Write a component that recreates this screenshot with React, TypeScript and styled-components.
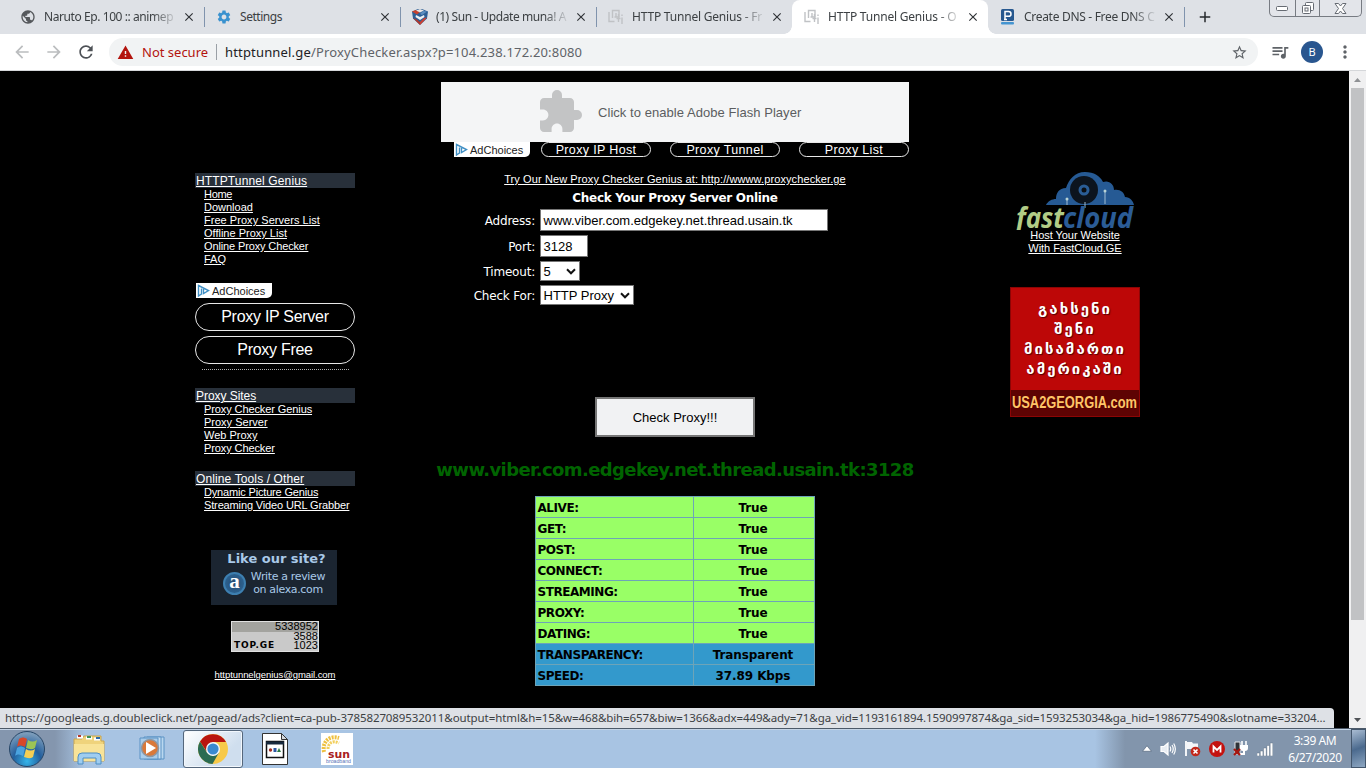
import React from "react";
import styled, { createGlobalStyle, css } from "styled-components";
import {
    MdAdd,
    MdArrowBack,
    MdArrowForward,
    MdClose,
    MdExtension,
    MdMoreVert,
    MdPublic,
    MdQueueMusic,
    MdRefresh,
    MdSettings,
    MdStarBorder,
    MdWarning,
} from "react-icons/md";

const GlobalStyle = createGlobalStyle`
    * {
        box-sizing: border-box;
    }
    body {
        margin: 0;
        background: #000;
        overflow: hidden;
    }
`;

const uiFont = `"Noto Sans", "Open Sans", sans-serif`;
const arial = `"Liberation Sans", Arial, sans-serif`;
const verdana = `"DejaVu Sans", Verdana, sans-serif`;

const Screen = styled.div`
    width: 1366px;
    height: 768px;
    display: flex;
    flex-direction: column;
    overflow: hidden;
    font-family: ${arial};
`;

/* tab strip */

const TabStrip = styled.div`
    height: 34px;
    flex: none;
    display: flex;
    align-items: flex-start;
    padding-left: 8px;
    background: #dee1e6;
`;

const TabBox = styled.div<{ $active?: boolean; $line?: boolean }>`
    position: relative;
    width: 196px;
    height: 34px;
    flex: none;
    display: flex;
    align-items: center;
    padding: 0 7px 0 12px;
    color: #3c4043;
    ${(p) => p.$active && css`
        background: #fff;
        border-radius: 8px 8px 0 0;
        &::before,
        &::after {
            content: "";
            position: absolute;
            bottom: 0;
            width: 8px;
            height: 8px;
        }
        &::before {
            left: -8px;
            background: radial-gradient(circle at 0 0, #dee1e6 7.5px, #fff 8px);
        }
        &::after {
            right: -8px;
            background: radial-gradient(circle at 100% 0, #dee1e6 7.5px, #fff 8px);
        }
    `}
    ${(p) => p.$line && css`
        &::after {
            content: "";
            position: absolute;
            right: -1px;
            top: 7px;
            width: 1px;
            height: 20px;
            background: #8093ad;
        }
    `}
    > svg {
        flex: none;
    }
`;

const TabTitle = styled.span<{ $fade?: boolean; $ls: number }>`
    width: 132px;
    margin-left: 8px;
    margin-right: 6px;
    overflow: hidden;
    white-space: nowrap;
    font: 12px/16px ${uiFont};
    letter-spacing: ${(p) => p.$ls}px;
    ${(p) => p.$fade && css`
        mask-image: linear-gradient(90deg, #000 108px, transparent 134px);
    `}
`;

const NewTab = styled.div`
    width: 43px;
    height: 34px;
    padding-left: 12px;
    display: flex;
    align-items: center;
    color: #26292c;
`;

const WindowButtons = styled.div`
    margin-left: 42px;
    width: 93px;
    height: 17px;
    display: flex;
    border: 1px solid #777b82;
    border-top: none;
    border-radius: 0 0 5px 5px;
    background: #e3e5ea;
`;

const WindowButton = styled.div<{ $w: number }>`
    width: ${(p) => p.$w}px;
    display: flex;
    align-items: center;
    justify-content: center;
    & + & {
        border-left: 1px solid #777b82;
    }
`;

/* toolbar */

const Toolbar = styled.div`
    height: 37px;
    flex: none;
    display: flex;
    align-items: center;
    padding: 0 0 0 12px;
    background: #fff;
    border-bottom: 1px solid #d5d7da;
    > svg {
        flex: none;
        color: #5f6368;
    }
`;

const NavButton = styled.div<{ $off?: boolean }>`
    width: 32px;
    height: 20px;
    color: ${(p) => (p.$off ? "#bbbdbf" : "#4d5156")};
`;

const Omnibox = styled.div`
    width: 1149px;
    height: 28px;
    margin: 0 12px 0 1px;
    padding: 0 10px 0 8px;
    display: flex;
    align-items: center;
    border-radius: 14px;
    background: #f1f3f4;
    font: 13px/20px ${uiFont};
    color: #5f6368;
    white-space: nowrap;
`;

const NotSecure = styled.span`
    margin-left: 8px;
    width: 74px;
    color: #b3140e;
`;

const Url = styled.span`
    flex: 1;
    padding-left: 9px;
    letter-spacing: 0.17px;
    background: linear-gradient(#9aa0a6, #9aa0a6) 0 2px / 1px 16px no-repeat;
    b {
        font-weight: normal;
        color: #202124;
    }
`;

const Avatar = styled.div`
    width: 22px;
    height: 22px;
    margin: 0 12px 0 11px;
    border-radius: 50%;
    background: #29568f;
    color: #fff;
    font: 11px/22px ${uiFont};
    text-align: center;
`;

/* page */

const Viewport = styled.div`
    position: relative;
    height: 657px;
    flex: none;
    display: flex;
`;

const Page = styled.div`
    width: 1349px;
    padding-left: 195px;
    display: grid;
    grid-template-columns: 160px 640px 160px;
    background: #000;
    color: #fff;
`;

const Scrollbar = styled.div`
    width: 17px;
    display: flex;
    flex-direction: column;
    align-items: center;
    background: #f0f0f1;
`;

const ScrollArrow = styled.div`
    height: 17px;
    display: flex;
    align-items: center;
`;

const Thumb = styled.div`
    width: 13px;
    height: 532px;
    margin-bottom: auto;
    background: #c1c2c4;
`;

const Side = styled.div`
    padding-top: 102px;
    display: flex;
    flex-direction: column;
`;

const MenuHead = styled.div<{ $gap?: number; $ls?: number }>`
    height: 15px;
    margin-top: ${(p) => p.$gap || 0}px;
    padding-left: 1px;
    background: #28303a;
    font: 12px/16px ${arial};
    letter-spacing: ${(p) => p.$ls || 0}px;
    text-decoration: underline;
    white-space: nowrap;
`;

const MenuLink = styled.a<{ $ls: number }>`
    display: block;
    height: 13px;
    padding-left: 9px;
    font: 11px/13px ${arial};
    letter-spacing: ${(p) => p.$ls}px;
    text-decoration: underline;
    white-space: nowrap;
`;

const AdTag = styled.div`
    width: 76px;
    height: 15px;
    display: flex;
    align-items: center;
    padding-left: 1px;
    gap: 2px;
    border-radius: 0 0 5px 0;
    background: #fff;
    color: #222;
    font: 11px/13px ${arial};
    white-space: nowrap;
    span {
        padding-top: 2px;
    }
`;

const Pill = styled.div<{ $small?: boolean }>`
    display: flex;
    align-items: center;
    justify-content: center;
    width: ${(p) => (p.$small ? 110 : 160)}px;
    height: ${(p) => (p.$small ? 15 : 28)}px;
    border: 1px solid #e8e8e8;
    border-radius: 14px;
    font-size: ${(p) => (p.$small ? 12.5 : 16)}px;
    letter-spacing: ${(p) => (p.$small ? 0.35 : -0.28)}px;
    white-space: nowrap;
`;

const SidePills = styled.div`
    display: flex;
    flex-direction: column;
    gap: 5px;
    margin-top: 17px;
    ${AdTag} {
        margin-left: 1px;
    }
`;

const Dotted = styled.div`
    margin: 5px 6px 0 7px;
    border-top: 1px dotted #b0b0b0;
`;

const AlexaBadge = styled.div`
    width: 126px;
    height: 55px;
    margin: 38px 0 0 16px;
    display: grid;
    grid-template-columns: 36px 90px;
    grid-template-rows: 17px 38px;
    background: #1b2531;
    color: #a9c9e8;
    font: 11px/13px ${verdana};
`;

const AlexaTitle = styled.div`
    grid-column: 1 / 3;
    padding-left: 5px;
    text-align: center;
    font: bold 13px/17px ${verdana};
    white-space: nowrap;
`;

const AlexaLogo = styled.div`
    width: 23px;
    height: 23px;
    margin: 5px 0 0 12px;
    border: 2px solid #3d7fb0;
    border-radius: 50%;
    background: radial-gradient(#274b70, #2e6a9c);
    color: #fff;
    font: bold 21px/14px "Liberation Serif", serif;
    text-align: center;
`;

const AlexaText = styled.div`
    margin-top: 3px;
    padding-right: 8px;
    text-align: center;
    white-space: nowrap;
    letter-spacing: -0.35px;
`;

const TopGe = styled.div`
    width: 88px;
    height: 31px;
    margin: 16px 0 0 36px;
    padding: 0 1px 0 2px;
    display: flex;
    justify-content: space-between;
    align-items: flex-end;
    border: 1px solid #e0e0e0;
    background: linear-gradient(#a3a39f 10px, #c9c9c9 10px);
    color: #000;
    font: bold 9px/12px ${verdana};
    letter-spacing: 0.9px;
`;

const Counts = styled.div`
    font: 11px/9.7px ${arial};
    text-align: right;
    letter-spacing: 0;
`;

const Mail = styled.a`
    margin-top: 16px;
    text-align: center;
    font: 9.5px/13px ${arial};
    letter-spacing: -0.07px;
    text-decoration: underline;
`;

/* centre column */

const Center = styled.div`
    padding-top: 11px;
    display: flex;
    flex-direction: column;
    align-items: center;
`;

const FlashBanner = styled.div`
    width: 468px;
    height: 60px;
    display: flex;
    align-items: center;
    padding-left: 95px;
    background: #f4f5f6;
    color: #5b5d60;
    font-size: 13px;
    letter-spacing: 0.05px;
    white-space: nowrap;
    svg {
        flex: none;
        margin-right: 14px;
    }
`;

const AdRow = styled.div`
    width: 468px;
    padding-left: 13px;
    display: flex;
    align-items: center;
    ${Pill} {
        margin-left: 19px;
    }
    ${AdTag} + ${Pill} {
        margin-left: 11px;
    }
`;

const TryLink = styled.a`
    margin-top: 16px;
    font: 11px/13px ${arial};
    letter-spacing: 0.1px;
    text-decoration: underline;
    white-space: nowrap;
`;

const Heading = styled.div`
    height: 15px;
    margin-top: 5px;
    font: bold 12px/15px ${verdana};
    letter-spacing: -0.3px;
    white-space: nowrap;
`;

const Form = styled.div`
    width: 640px;
    margin-top: 3px;
    display: grid;
    grid-template-columns: 180px 1fr;
    column-gap: 5px;
    row-gap: 4px;
`;

const Label = styled.div`
    align-self: center;
    padding-top: 2px;
    text-align: right;
    font: 12px/16px ${verdana};
    letter-spacing: -0.2px;
`;

const Field = styled.div<{ $w: number; $h: number }>`
    width: ${(p) => p.$w}px;
    height: ${(p) => p.$h}px;
    display: flex;
    align-items: center;
    justify-content: space-between;
    padding: 0 3px 0 2.5px;
    border: 1px solid #767676;
    background: #fff;
    color: #000;
    font-size: 13px;
    white-space: nowrap;
`;

const CheckButton = styled.div`
    width: 160px;
    height: 40px;
    margin-top: 92px;
    border: 2px solid #767676;
    background: #f1f2f3;
    color: #000;
    text-align: center;
    font-size: 13px;
    line-height: 37px;
`;

const Result = styled.div`
    margin-top: 20px;
    height: 25px;
    color: #006400;
    font: bold 18px/25px ${verdana};
    letter-spacing: -0.61px;
    white-space: nowrap;
`;

const Table = styled.table`
    width: 280px;
    margin-top: 14px;
    border-collapse: collapse;
    table-layout: fixed;
    color: #000;
    font: bold 12px/16px ${verdana};
`;

const Row = styled.tr<{ $blue?: boolean }>`
    height: 21px;
    background: ${(p) => (p.$blue ? "#3399cc" : "#99ff66")};
`;

const Cell = styled.td<{ $w: number; $center?: boolean }>`
    width: ${(p) => p.$w}px;
    padding: ${(p) => (p.$center ? "2px 3px 0 1px" : "2px 1px 0 1.5px")};
    border: 1px solid #6da4b8;
    text-align: ${(p) => (p.$center ? "center" : "left")};
    letter-spacing: ${(p) => (p.$center ? -0.1 : -0.45)}px;
`;

/* right column */

const CloudAd = styled.div`
    display: flex;
    flex-direction: column;
    align-items: center;
    font: 11px/13px ${arial};
    letter-spacing: -0.05px;
    text-decoration: underline;
    svg {
        margin-top: -1px;
        margin-bottom: -1px;
    }
`;

const RedAd = styled.div`
    width: 130px;
    height: 130px;
    margin: 32px auto 0;
    padding-top: 11px;
    display: flex;
    flex-direction: column;
    justify-content: space-between;
    background: #bd0707;
    border: 1px solid #8d0505;
    text-align: center;
    font: bold 15px/20px ${verdana};
    letter-spacing: 2px;
    text-shadow: 1px 1px 1px #500;
`;

const RedFoot = styled.div`
    height: 26px;
    background: #5e0303;
    svg {
        display: block;
    }
`;

const StatusBubble = styled.div`
    position: absolute;
    left: 0;
    bottom: 0;
    width: 1334px;
    height: 20px;
    padding-left: 5px;
    border-radius: 0 4px 0 0;
    background: #dee1e6;
    color: #3c4043;
    font: 11.5px/19px ${uiFont};
    letter-spacing: -0.085px;
    white-space: nowrap;
`;

/* taskbar */

const Taskbar = styled.div`
    height: 40px;
    flex: none;
    display: flex;
    align-items: center;
    border-top: 1px solid #4c5968;
    box-shadow: inset 0 1px 0 #c4d4e6;
    background: linear-gradient(90deg, #8496ae 55px, #a8c4e3 85px, #a8c4e3 1095px, #8295ac 1125px);
`;

const TaskItem = styled.div<{ $active?: boolean; $w: number }>`
    width: ${(p) => p.$w}px;
    height: 38px;
    display: flex;
    align-items: center;
    justify-content: center;
    ${(p) => p.$active && css`
        border: 1px solid #55677c;
        border-radius: 3px;
        background: linear-gradient(135deg, #fff, #cfdeee 70%);
        box-shadow: inset 0 0 0 1px #f2f7fc;
    `}
`;

const Tray = styled.div`
    margin-left: auto;
    display: flex;
    align-items: center;
    gap: 8px;
`;

const Clock = styled.div`
    width: 62px;
    margin-left: 3px;
    margin-right: -3px;
    color: #fff;
    text-align: center;
    font: 12px/17px ${uiFont};
    letter-spacing: -0.4px;
    white-space: nowrap;
`;

const ShowDesktop = styled.div`
    width: 15px;
    height: 39px;
    border: 1px solid #43566c;
    background: linear-gradient(160deg, #a9bcd2, #4b6a8e 50%, #8ea7c2);
`;

const menus = [
    {
        title: "HTTPTunnel Genius",
        ls: 0.13,
        items: [
            ["Home", -0.3],
            ["Download", 0],
            ["Free Proxy Servers List", 0.04],
            ["Offline Proxy List", 0],
            ["Online Proxy Checker", -0.13],
            ["FAQ", 0],
        ],
    },
    {
        title: "Proxy Sites",
        ls: -0.05,
        items: [
            ["Proxy Checker Genius", -0.1],
            ["Proxy Server", 0],
            ["Web Proxy", 0],
            ["Proxy Checker", -0.1],
        ],
    },
    {
        title: "Online Tools / Other",
        ls: 0.12,
        items: [
            ["Dynamic Picture Genius", -0.17],
            ["Streaming Video URL Grabber", -0.14],
        ],
    },
] as const;

const results = [
    ["ALIVE:", "True"],
    ["GET:", "True"],
    ["POST:", "True"],
    ["CONNECT:", "True"],
    ["STREAMING:", "True"],
    ["PROXY:", "True"],
    ["DATING:", "True"],
    ["TRANSPARENCY:", "Transparent"],
    ["SPEED:", "37.89 Kbps"],
];

const statusUrl =
    "https://googleads.g.doubleclick.net/pagead/ads?client=ca-pub-3785827089532011&output=html&h=15&w=468&bih=657&biw=1366&adx=449&ady=71&ga_vid=1193161894.1590997874&ga_sid=1593253034&ga_hid=1986775490&slotname=33204...";

function CubeIcon() {
    return (
        <svg width="16" height="16" viewBox="0 0 16 16">
            <path d="M0 2.5l6-2.500 4 0 6 2.500-1 7-7 6.500-7-6.500z" fill="#2d5f96" />
            <path d="M0 2.500l4-1.500 4 2-3 2.500z" fill="#c9402c" />
            <path d="M4 1.500L8 0l4 1.500-4 2z" fill="#e9e5e3" />
            <path d="M11 2l4 .5-5 3.500-2-1z" fill="#5d8fc0" />
            <path d="M4 6l4 2 4-2 .5 2L8 11 3.500 8z" fill="#eef1f4" />
            <path d="M1 9l3 1 4 3v3z" fill="#b4372b" />
            <path d="M15 8.500L8 16v-3l4-4z" fill="#d0402f" />
        </svg>
    );
}

function TunnelIcon() {
    return (
        <svg width="16" height="16" viewBox="0 0 16 16" fill="none" stroke="#c0c2c5" strokeWidth="1.400">
            <path d="M1 3v9.500h5.500" />
            <path d="M4.500 9V1.500H11V8H6.500M8 4v4" />
            <path d="M10.500 5v8M8.500 9.500h4M14 8.500V15M14 5.500v1.500" />
        </svg>
    );
}

function DnsIcon() {
    return (
        <svg width="16" height="16" viewBox="0 0 16 16">
            <rect x="1" y="0" width="13" height="12" rx="1.5" fill="#27588f" />
            <path d="M5 10.5V2.5h3.6a2.3 2.3 0 010 4.8H5M4 10.5h3" fill="none" stroke="#fff" strokeWidth="1.5" />
            <rect x="1" y="13" width="13" height="2.4" rx="1" fill="#4595d1" />
        </svg>
    );
}

function AdChoices() {
    return (
        <AdTag>
            <svg width="13" height="13" viewBox="0 0 13 13" fill="none" stroke="#3f8fc4" strokeWidth="1.400">
                <path d="M4.500 10L1.500 12V1.500l10 5-5 3V5" />
                <path d="M4.500 4.500v6" />
            </svg>
            <span>AdChoices</span>
        </AdTag>
    );
}

function SelectArrow() {
    return (
        <svg width="10" height="7" viewBox="0 0 10 7" fill="none" stroke="#111" strokeWidth="2">
            <path d="M1 1.3l4 4 4-4" />
        </svg>
    );
}

function FastCloudLogo() {
    return (
        <svg width="122" height="58" viewBox="0 0 122 58">
            <path
                d="M32 33c2-4 6-6 10-6 0-6 3-11 10-11 3-9 9-16 19-16 9 0 15 4 18 10 6-2 11 2 11 8 6-1 10 2 11 7 5 0 8 4 9 8z"
                fill="#265a94"
            />
            <circle cx="70" cy="18" r="14" fill="#0c141e" />
            <circle cx="70" cy="18" r="5.5" fill="#2a5d96" />
            <circle cx="70" cy="18" r="2.5" fill="#0b0f14" />
            <path d="M53 28v5M91 20v12M71 30v6" stroke="#9fbcd3" strokeWidth="1" />
            <circle cx="53" cy="27" r="1.5" fill="#b9d3d5" />
            <circle cx="91" cy="19" r="1.5" fill="#b9d3d5" />
            <g fontFamily='"Open Sans", "Noto Sans", sans-serif' fontStyle="italic" fontWeight="bold" fontSize="28">
                <text x="2" y="56" textLength="48" lengthAdjust="spacingAndGlyphs" fill="#b2cc86">fast</text>
                <text x="49" y="56" textLength="70" lengthAdjust="spacingAndGlyphs" fill="#2b5c96">cloud</text>
            </g>
        </svg>
    );
}

function StartOrb() {
    return (
        <svg width="38" height="38" viewBox="0 0 38 38">
            <defs>
                <radialGradient id="orb" cx="50%" cy="85%" r="80%">
                    <stop offset="0" stopColor="#35b5ea" />
                    <stop offset="0.5" stopColor="#235f9d" />
                    <stop offset="1" stopColor="#7c9cba" />
                </radialGradient>
            </defs>
            <circle cx="19" cy="19" r="17.5" fill="url(#orb)" stroke="#274667" />
            <path d="M11 9c3-2 5-2 8 0l-2 8c-3-2-6-2-8 0z" fill="#d8482a" />
            <path d="M20 10c3 2 6 2 9 0l-2 8c-3 2-6 1-9 0z" fill="#9cc455" />
            <path d="M9 18c3-2 5-2 8 0l-2 8c-3-2-6-2-8 0z" fill="#4aa3df" />
            <path d="M18 19c3 2 6 2 9 0l-2 8c-3 2-6 1-9 0z" fill="#f4cf55" />
        </svg>
    );
}

function FolderIcon() {
    return (
        <svg width="34" height="32" viewBox="0 0 34 32">
            <path d="M2 6h8l2-3h17v5h3v20H2z" fill="#efd37c" stroke="#c9a54e" />
            <path d="M5 4h6M14 5h6M22 6h6" stroke="#fff" strokeWidth="3" />
            <path d="M6 3h3" stroke="#b83a2c" strokeWidth="2" />
            <path d="M15 4h4" stroke="#3c9256" strokeWidth="2" />
            <path d="M24 5h4" stroke="#2e6ca9" strokeWidth="2" />
            <path d="M2 11h30v17H2z" fill="#f8e398" />
            <path d="M6 31v-7q0-4 4-4h15q4 0 4 4v7h-5v-6H11v6z" fill="#9fcdf0" stroke="#4c8ec4" />
        </svg>
    );
}

function PlayerIcon() {
    return (
        <svg width="30" height="28" viewBox="0 0 30 28">
            <path d="M8 2h17v22H8z" fill="#b9d7ef" stroke="#5b92c4" />
            <path d="M5 2h17v22H5z" fill="#c9e0f3" stroke="#5b92c4" />
            <path d="M1 3h18v21H1z" fill="#a9cdeb" stroke="#5b92c4" />
            <circle cx="11" cy="13" r="8.500" fill="#d9793a" stroke="#8c98a5" strokeWidth="1.5" />
            <path d="M7 7l10 6-10 6z" fill="#fff" />
        </svg>
    );
}

function ChromeIcon() {
    return (
        <svg width="30" height="30" viewBox="0 0 30 30">
            <circle cx="15" cy="15" r="15" fill="#f7c948" />
            <path d="M15 8h13a15 15 0 00-26-.5L9 18z" fill="#b9150f" />
            <path d="M2 7.5A15 15 0 0014.500 30L21 18.500 15 22 9 18.500z" fill="#2b6b52" />
            <circle cx="15" cy="15" r="7" fill="#f4f8fb" />
            <circle cx="15" cy="15" r="5.600" fill="#3b8ad0" />
        </svg>
    );
}

function DocIcon() {
    return (
        <svg width="26" height="32" viewBox="0 0 26 32">
            <path d="M.5.500h19l6 6v25H.5z" fill="#fff" stroke="#333" />
            <path d="M19.500.500v6h6z" fill="#d5d9de" stroke="#333" />
            <rect x="4.500" y="8.500" width="17" height="16" fill="#fff" stroke="#111" strokeWidth="1.500" />
            <path d="M4 10h18" stroke="#16283c" strokeWidth="3" />
            <circle cx="8.500" cy="17" r="1.700" fill="#a32b20" />
            <path d="M11.500 15h3v4h-3z" fill="#2c57a3" />
            <path d="M17 15l2 4h-4z" fill="#2b7a45" />
        </svg>
    );
}

function SunIcon() {
    return (
        <svg width="32" height="32" viewBox="0 0 32 32">
            <rect width="32" height="32" fill="#fff" />
            <path d="M3 19C1 9 8 2 18 5" fill="none" stroke="#eec040" strokeWidth="4" strokeDasharray="2 1" />
            <path d="M7 16c0-6 5-9 11-6" fill="none" stroke="#f2cf5c" strokeWidth="3" strokeDasharray="2 1" />
            <text x="7" y="25" textLength="22" lengthAdjust="spacingAndGlyphs" fontFamily="DejaVu Sans" fontWeight="bold" fontSize="11" fill="#a8201c">sun</text>
            <text x="5" y="30" textLength="25" lengthAdjust="spacingAndGlyphs" fontFamily="Liberation Sans" fontSize="5" fill="#5573b8">broadband</text>
        </svg>
    );
}

function TrayIcons() {
    return (
        <>
            <svg width="10" height="7" viewBox="0 0 9 6">
                <path d="M4.500 0.500l4 5h-8z" fill="#fff" stroke="#52647a" strokeWidth=".6" />
            </svg>
            <svg width="16" height="16" viewBox="0 0 16 16" fill="none" stroke="#fff" strokeWidth="1.200">
                <path d="M1 5.500h3L8 2v12l-4-3.500H1z" fill="#e8edf3" />
                <path d="M10 5.500q1.500 2.500 0 5M12 4q2.500 4 0 8M13.700 2.500q3.300 5.500 0 11" />
            </svg>
            <svg width="17" height="17" viewBox="0 0 17 17">
                <path d="M2 1v15" stroke="#fff" strokeWidth="1.800" />
                <path d="M3 2h5l1 1.500h5V10H9L8 9H3z" fill="#f4f6f9" />
                <circle cx="11.500" cy="11.500" r="4.800" fill="#c2281a" />
                <path d="M9.500 9.500l4 4m0-4l-4 4" stroke="#fff" strokeWidth="1.600" />
            </svg>
            <svg width="16" height="16" viewBox="0 0 16 16">
                <circle cx="8" cy="8" r="8" fill="#c4120f" />
                <path d="M4.500 11.500v-6L8 9l3.500-3.500v6" fill="none" stroke="#fff" strokeWidth="1.800" />
            </svg>
            <svg width="16" height="17" viewBox="0 0 16 17">
                <path d="M2 2h5v12H2z" fill="#2f3338" stroke="#e1e5ea" />
                <path d="M7 5h8v3q0 3-3 3v4H7v-2h3v-2q-3 0-3-3z" fill="#fff" />
                <path d="M9 1v4M13 1v4" stroke="#fff" strokeWidth="1.600" />
                <path d="M1 9l6 6m0-6l-6 6" stroke="#a8160f" strokeWidth="2.200" />
            </svg>
            <svg width="16" height="14" viewBox="0 0 16 14" fill="#fff" stroke="#52647a" strokeWidth=".4">
                <path d="M0 11h2.600v3H0zM3.300 9h2.600v5H3.300zM6.600 6h2.600v8H6.600zM9.900 3.500h2.600V14H9.900zM13.200 1h2.600v13h-2.600z" />
            </svg>
        </>
    );
}

type TabProps = {
    icon: React.ReactNode;
    title: string;
    ls: number;
    active?: boolean;
    line?: boolean;
};

function Tab({ icon, title, ls, active, line }: TabProps) {
    return (
        <TabBox $active={active} $line={line}>
            {icon}
            <TabTitle $fade={title.length > 12} $ls={ls}>{title}</TabTitle>
            <MdClose size={14} color="#2f3236" />
        </TabBox>
    );
}

function Menu({ index, gap }: { index: number; gap?: number }) {
    const menu = menus[index];
    return (
        <>
            <MenuHead $gap={gap} $ls={menu.ls}>{menu.title}</MenuHead>
            {menu.items.map(([name, ls]) => (
                <MenuLink key={name} $ls={ls}>{name}</MenuLink>
            ))}
        </>
    );
}

export default function App() {
    return (
        <Screen>
            <GlobalStyle />
            <TabStrip>
                <Tab icon={<MdPublic size={16} color="#55585c" />} title="Naruto Ep. 100 :: animep" ls={-0.42} line />
                <Tab icon={<MdSettings size={16} color="#3a92cf" />} title="Settings" ls={-0.45} line />
                <Tab icon={<CubeIcon />} title="(1) Sun - Update muna! A" ls={-0.42} line />
                <Tab icon={<TunnelIcon />} title="HTTP Tunnel Genius - Fr" ls={-0.2} />
                <Tab icon={<TunnelIcon />} title="HTTP Tunnel Genius - O" ls={-0.2} active />
                <Tab icon={<DnsIcon />} title="Create DNS - Free DNS C" ls={-0.3} line />
                <NewTab>
                    <MdAdd size={18} />
                </NewTab>
                <WindowButtons>
                    <WindowButton $w={25}>
                        <svg width="12" height="5" viewBox="0 0 12 5">
                            <rect x=".5" y=".5" width="11" height="4" rx="1" fill="#fff" stroke="#666b73" />
                        </svg>
                    </WindowButton>
                    <WindowButton $w={25}>
                        <svg width="14" height="13" viewBox="0 0 14 13" fill="#fff" stroke="#666b73">
                            <rect x="4.500" y=".5" width="8" height="8" rx="1" />
                            <rect x="1.500" y="3.500" width="8" height="8" rx="1" />
                            <rect x="4" y="6" width="3" height="3" />
                        </svg>
                    </WindowButton>
                    <WindowButton $w={42}>
                        <svg width="13" height="11" viewBox="0 0 13 11" fill="#fff" stroke="#666b73">
                            <path d="M1 .5h3.500l2 2.500 2-2.500H12L8.500 5.500l3.500 5H8.500l-2-2.500-2 2.500H1l3.500-5z" />
                        </svg>
                    </WindowButton>
                </WindowButtons>
            </TabStrip>
            <Toolbar>
                <NavButton $off>
                    <MdArrowBack size={20} />
                </NavButton>
                <NavButton $off>
                    <MdArrowForward size={20} />
                </NavButton>
                <NavButton>
                    <MdRefresh size={20} />
                </NavButton>
                <Omnibox>
                    <MdWarning size={17} color="#b3140e" />
                    <NotSecure>Not secure</NotSecure>
                    <Url>
                        <b>httptunnel.ge</b>/ProxyChecker.aspx?p=104.238.172.20:8080
                    </Url>
                    <MdStarBorder size={17} />
                </Omnibox>
                <MdQueueMusic size={20} />
                <Avatar>B</Avatar>
                <MdMoreVert size={20} />
            </Toolbar>
            <Viewport>
                <Page>
                    <Side>
                        <Menu index={0} />
                        <SidePills>
                            <AdChoices />
                            <Pill>Proxy IP Server</Pill>
                            <Pill>Proxy Free</Pill>
                        </SidePills>
                        <Dotted />
                        <Menu index={1} gap={18} />
                        <Menu index={2} gap={16} />
                        <AlexaBadge>
                            <AlexaTitle>Like our site?</AlexaTitle>
                            <AlexaLogo>a</AlexaLogo>
                            <AlexaText>
                                Write a review
                                <br />
                                on alexa.com
                            </AlexaText>
                        </AlexaBadge>
                        <TopGe>
                            TOP.GE
                            <Counts>
                                5338952
                                <br />
                                3588
                                <br />
                                1023
                            </Counts>
                        </TopGe>
                        <Mail>httptunnelgenius@gmail.com</Mail>
                    </Side>
                    <Center>
                        <FlashBanner>
                            <MdExtension size={48} color="#c3c4c5" />
                            Click to enable Adobe Flash Player
                        </FlashBanner>
                        <AdRow>
                            <AdChoices />
                            <Pill $small>Proxy IP Host</Pill>
                            <Pill $small>Proxy Tunnel</Pill>
                            <Pill $small>Proxy List</Pill>
                        </AdRow>
                        <TryLink>Try Our New Proxy Checker Genius at: http://wwww.proxychecker.ge</TryLink>
                        <Heading>Check Your Proxy Server Online</Heading>
                        <Form>
                            <Label>Address:</Label>
                            <Field $w={288} $h={22}>www.viber.com.edgekey.net.thread.usain.tk</Field>
                            <Label>Port:</Label>
                            <Field $w={48} $h={22}>3128</Field>
                            <Label>Timeout:</Label>
                            <Field $w={40} $h={20}>
                                5 <SelectArrow />
                            </Field>
                            <Label>Check For:</Label>
                            <Field $w={94} $h={20}>
                                HTTP Proxy <SelectArrow />
                            </Field>
                        </Form>
                        <CheckButton>Check Proxy!!!</CheckButton>
                        <Result>www.viber.com.edgekey.net.thread.usain.tk:3128</Result>
                        <Table>
                            <tbody>
                                {results.map(([name, value], i) => (
                                    <Row key={name} $blue={i > 6}>
                                        <Cell $w={158}>{name}</Cell>
                                        <Cell $w={121} $center>{value}</Cell>
                                    </Row>
                                ))}
                            </tbody>
                        </Table>
                    </Center>
                    <Side>
                        <CloudAd>
                            <FastCloudLogo />
                            <span>Host Your Website</span>
                            <span>With FastCloud.GE</span>
                        </CloudAd>
                        <RedAd>
                            <div>
                                გახსენი
                                <br />
                                შენი
                                <br />
                                მისამართი
                                <br />
                                ამერიკაში
                            </div>
                            <RedFoot>
                                <svg width="128" height="26" viewBox="0 0 128 26">
                                    <text
                                        x="1"
                                        y="18"
                                        textLength="125"
                                        lengthAdjust="spacingAndGlyphs"
                                        fontFamily="Liberation Sans"
                                        fontWeight="bold"
                                        fontSize="16"
                                        letterSpacing="0"
                                        fill="#ffc567"
                                    >
                                        USA2GEORGIA.com
                                    </text>
                                </svg>
                            </RedFoot>
                        </RedAd>
                    </Side>
                </Page>
                <Scrollbar>
                    <ScrollArrow>
                        <svg width="7" height="4" viewBox="0 0 7 4">
                            <path d="M3.500 0L7 4H0z" fill="#8f9194" />
                        </svg>
                    </ScrollArrow>
                    <Thumb />
                    <ScrollArrow>
                        <svg width="7" height="4" viewBox="0 0 7 4">
                            <path d="M0 0h7L3.500 4z" fill="#505357" />
                        </svg>
                    </ScrollArrow>
                </Scrollbar>
                <StatusBubble>{statusUrl}</StatusBubble>
            </Viewport>
            <Taskbar>
                <TaskItem $w={54}>
                    <StartOrb />
                </TaskItem>
                <TaskItem $w={70}>
                    <FolderIcon />
                </TaskItem>
                <TaskItem $w={59}>
                    <PlayerIcon />
                </TaskItem>
                <TaskItem $w={60} $active>
                    <ChromeIcon />
                </TaskItem>
                <TaskItem $w={64}>
                    <DocIcon />
                </TaskItem>
                <TaskItem $w={60}>
                    <SunIcon />
                </TaskItem>
                <Tray>
                    <TrayIcons />
                    <Clock>
                        3:39 AM
                        <br />
                        6/27/2020
                    </Clock>
                    <ShowDesktop />
                </Tray>
            </Taskbar>
        </Screen>
    );
}
